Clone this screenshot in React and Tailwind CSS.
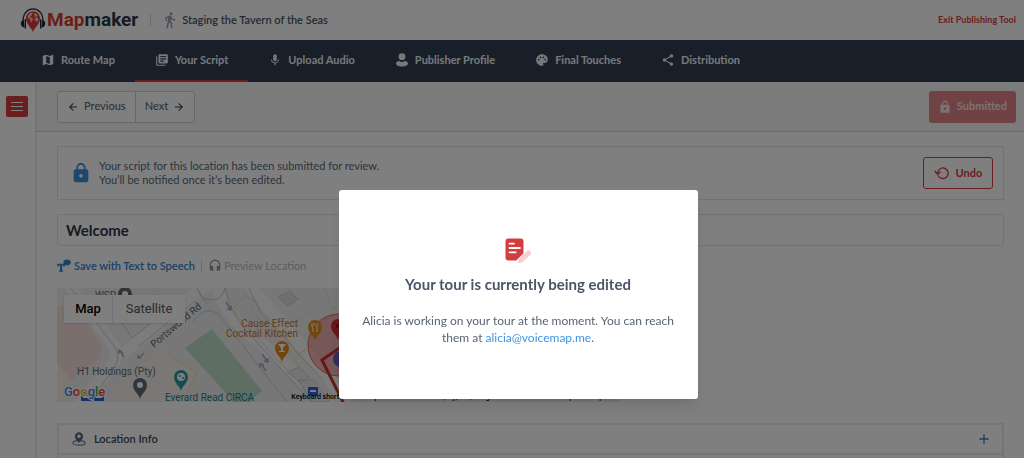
import React from "react";
import {
  MdMap,
  MdLibraryBooks,
  MdMic,
  MdPalette,
  MdShare,
  MdLock,
  MdArrowBack,
  MdArrowForward,
  MdDirectionsWalk,
  MdHeadset,
  MdAdd,
} from "react-icons/md";

function ProfileIcon({ className }) {
  return (
    <svg viewBox="0 0 14 14" className={className} fill="currentColor">
      <circle cx="7" cy="3.7" r="3.4" />
      <path d="M1 10.6C1 8.900 2.600 8 4 8c1 .6 2 .9 3 .9s2-.3 3-.9c1.400 0 3 .9 3 2.600 0 1.700-2.700 3-6 3s-6-1.300-6-3z" />
    </svg>
  );
}

function LogoMark() {
  return (
    <svg viewBox="0 0 26 26" className="h-[26px] w-[26px]">
      <path
        d="M3.400 16C2 7 7 2 13 2s11 5 9.600 14"
        fill="none"
        stroke="#2d3748"
        strokeWidth="1.400"
      />
      <path d="M3.800 13.200C1.800 13 .7 14.500.8 16.700c.1 2.200 1.700 3.800 3.700 3.800z" fill="#1f2937" />
      <path d="M22.200 13.200c2-.2 3.100 1.300 3 3.500-.1 2.200-1.700 3.800-3.700 3.800z" fill="#1f2937" />
      <path d="M5.300 12.800v8.200M20.700 12.800v8.200" stroke="#1f2937" strokeWidth="1.400" strokeLinecap="round" />
      <path
        d="M13 25.200c-.8-3.700-7-8-7-13.600C6 7.300 9 4.300 13 4.300s7 3 7 7.300c0 5.600-6.200 9.900-7 13.600z"
        fill="#d83a34"
      />
      <path
        d="M8.100 8.200c1.200-1.800 2.700-2.500 4.100-2.600l.8.900-1.200.8.300 1.100-1.600.6-.4 1.400 1.700.4 1.300 1.300-.9 1.500-.4 2-1.200-1.200-.3-1.900-1.700-1.300c-.9-.7-.9-1.900-.5-3z"
        fill="#f3c9c4"
      />
      <path
        d="M14.400 6.100c1.600.3 3 1.400 3.600 3l-.8.500-.9-.4-1.200.7-1.100-.8.900-.9-.7-1zM15.300 10.700l2.200.1.900 1.300c-.2 1.500-.9 2.500-1.900 3.300l-.5-1.700-1.400-.8z"
        fill="#f3c9c4"
      />
    </svg>
  );
}

function UndoIcon() {
  return (
    <svg viewBox="0 0 16 14" className="h-[14px] w-4" fill="none" stroke="currentColor">
      <path d="M4.200 9.700A5.300 5.300 0 1 0 3.700 6.300" strokeWidth="1.300" strokeLinecap="round" />
      <path d="M1.200 5.400l2.400 2.700 2.700-2.100" strokeWidth="1.500" strokeLinecap="round" strokeLinejoin="round" />
    </svg>
  );
}

function TextToSpeechIcon() {
  return (
    <svg viewBox="0 0 14 14" className="h-[14px] w-[14px]" fill="currentColor">
      <path d="M.3 4.800h7.400v2.600H6.400l-.4-1.200H5.100v5.100l1.100.5v1H1.900v-1l1.100-.5V6.200H2l-.4 1.200H.3z" />
      <path d="M9.900.4c2.200 0 3.900 1.300 3.900 3S12.100 6.300 9.900 6.300c-.5 0-.9 0-1.300-.2l-1.800.9.600-1.600c-.7-.5-1.100-1.200-1.100-2C6.300 1.700 7.800.4 9.900.4z" />
    </svg>
  );
}

function LocationIcon() {
  return (
    <svg viewBox="0 0 14 14" className="h-[14px] w-[14px]">
      <ellipse cx="7" cy="10.900" rx="6" ry="2.200" fill="none" stroke="#718096" strokeWidth="1.300" />
      <path
        d="M7 11.200C6.300 9.200 2.900 7.400 2.900 4.400A4.100 4.100 0 0 1 7 .2a4.100 4.100 0 0 1 4.100 4.200C11.100 7.400 7.700 9.200 7 11.200z"
        fill="#5a6b80"
      />
      <circle cx="7" cy="4.300" r="1.700" fill="#fff" />
    </svg>
  );
}

function EditingIcon() {
  return (
    <svg viewBox="0 0 26 26" className="h-[26px] w-[26px]">
      <path
        d="M3.500.5h12a3 3 0 0 1 3 3v11.800L11.200 22.500H3.500a3 3 0 0 1-3-3v-16a3 3 0 0 1 3-3z"
        fill="#d43d40"
      />
      <path d="M4.500 5.700h4.400M4.500 10h10.400M4.500 14.300h6.200" stroke="#fff" strokeWidth="1.800" strokeLinecap="round" />
      <path d="M13.200 25.200l.5-3.900 8.100-8.100a2.500 2.500 0 0 1 3.600 3.600l-8.200 7.800z" fill="#f5d0d2" />
    </svg>
  );
}

const tabs = [
  { label: "Route Map", icon: MdMap },
  { label: "Your Script", icon: MdLibraryBooks, active: true },
  { label: "Upload Audio", icon: MdMic },
  { label: "Publisher Profile", icon: ProfileIcon },
  { label: "Final Touches", icon: MdPalette },
  { label: "Distribution", icon: MdShare },
];

function Header() {
  return (
    <header className="flex h-10 shrink-0 items-center bg-white pr-2 pl-5">
      <a href="#home" className="flex items-center gap-px">
        <LogoMark />
        <span className="font-[Roboto] text-[19px] leading-5 font-bold text-[#2d3748]">
          <span className="text-[#d83a34]">Map</span>maker
        </span>
      </a>
      <span className="ml-3 h-3 w-px bg-gray-300" />
      <MdDirectionsWalk className="ml-[10px] h-[18px] w-[18px] text-gray-400" />
      <span className="ml-[3px] text-[11px] font-semibold text-[#4a5568]">Staging the Tavern of the Seas</span>
      <a href="#exit" className="ml-auto text-[9px] font-bold text-[#d43d40]">
        Exit Publishing Tool
      </a>
    </header>
  );
}

function TabBar() {
  return (
    <nav className="flex h-[42px] shrink-0 bg-[#303e52] pl-[21px]">
      {tabs.map(({ label, icon: Icon, active }) => (
        <a
          key={label}
          href="#tab"
          className={`flex items-center gap-[6px] border-b-2 px-5 text-[11px] font-bold text-[#edf2f7] ${
            active ? "border-[#d43d40]" : "border-transparent"
          }`}
        >
          <Icon className="h-[14px] w-[14px]" />
          {label}
        </a>
      ))}
    </nav>
  );
}

function Pin({ x, y, color, children }) {
  return (
    <g transform={`translate(${x} ${y})`}>
      <path d="M0 14C-1 9-7 6-7 0a7 7 0 0 1 14 0C7 6 1 9 0 14z" fill={color} />
      {children}
    </g>
  );
}

function TourMap() {
  return (
    <div className="relative mt-[14px] h-[114px] max-w-[563px] overflow-hidden bg-[#ededed]">
      <svg
        viewBox="0 0 563 114"
        preserveAspectRatio="xMinYMin slice"
        className="h-full w-full font-[Roboto]"
      >
        <rect width="563" height="114" fill="#efefee" />
        <path d="M0 18h20l25 40-2 12L14 92 0 104z" fill="#f6dfdd" />
        <path d="M0 76l14 16-10 8 6 14H0z" fill="#f9efe3" />
        <path d="M55 104l52-44 36 26-18 28H62z" fill="#f5efe8" />
        <path d="M128 60l27-19 50 62-12 11h-16z" fill="#bfdcc6" />
        <g fill="none" stroke="#f8f8f8" strokeWidth="12">
          <path d="M10-6l46 62q8 12-4 26L22 118" />
          <path d="M66 66l90-74" />
          <path d="M160 0q4 16 22 36l92 82" />
          <path d="M192-4l84 100 14 22" />
        </g>
        <g fill="none" stroke="#c9cdd3">
          <path d="M14 0l43 58q6 9 2 18-4 8-26 38" />
          <path d="M55 20l20 30 18-14M82 58l57-46M140 0q4 8 10 16" />
          <path d="M136 34q12-18 25-8l69 88" />
          <path d="M140-1q2 13 14 13t14-13" />
          <path d="M168 0q5 26 27 49l59 65M192 0l12 25 63 68" />
          <path d="M230 84l12-5 10 10-8 6zM241 92l16 0 16 22h-18z" fill="#e8e9ea" />
          <path d="M221 9l12-6 8 8-10 8z" fill="#dcdee0" />
        </g>
        <g fill="none" stroke="#f2dcb4">
          <path d="M0 88l22-24 4 6M97 0l14 9-12 8" />
          <path d="M176 21l12-14 10 7-5 6 50 58-9 8-52-56z" />
          <path d="M225 43l28-18 20 20-32 22z" />
          <path d="M267 0l8 21 19-9M110 65l30 20-10 20" />
        </g>
        <g stroke="#a8a9c9" strokeWidth="1.500" fill="none">
          <path d="M67 69l-4-6M66 65l-4-3v4M82 70l5-5M84 70h-3v-3" />
          <path d="M169 14l5 8M170 21l4 1v-4M205 66l6 8M207 73l4 1v-4M209 83l-5-7M203 80v-4l4 1" />
        </g>

        <circle cx="282" cy="57" r="31" fill="#e8736f" fillOpacity=".5" stroke="#d66" />
        <path d="M297 50l-32 22 22 44" fill="none" stroke="#cf2f2f" strokeWidth="3" />
        <Pin x={68} y={6} color="#5c6c7a">
          <circle r="3" fill="#fff" />
        </Pin>
        <Pin x={83} y={97} color="#5c6c7a">
          <circle r="3" fill="#fff" />
        </Pin>
        <Pin x={124} y={89} color="#2699a6">
          <circle r="4" fill="#fff" />
          <circle cx="-1" cy="-1" r="1" fill="#2699a6" />
          <circle cx="2" cy="1" r="1" fill="#2699a6" />
        </Pin>
        <Pin x={225} y={60} color="#e38f1e">
          <path d="M-4-4h8L1 0v3h2v1h-6V3h2V0z" fill="#fff" />
        </Pin>
        <Pin x={258} y={39} color="#e38f1e">
          <path d="M-3-4v3q0 2 1 2v4M-1-4v3M3-4q-2 1-1 5v4" stroke="#fff" fill="none" />
        </Pin>
        <Pin x={281} y={38} color="#cf2f2f">
          <circle r="2" fill="#8b1a1a" />
        </Pin>
        <circle cx="284" cy="71" r="8" fill="#5b5fc0" />
        <rect x="24" y="104" width="10" height="9" rx="1" fill="#2f63d0" />
        <rect x="37" y="104" width="10" height="9" rx="1" fill="#2f63d0" />
        <rect x="251" y="99" width="10" height="9" rx="1" fill="#2f63d0" />
        <path d="M26 109h6M39 109h6M253 103h6" stroke="#fff" strokeWidth="2" />

        <g fontSize="10" fill="#5c6c7a">
          <text x="38" y="11">WSP</text>
          <text x="20" y="87">H1 Holdings (Pty)</text>
          <text x="97" y="60" transform="rotate(-40 97 60)">Portswood Rd</text>
        </g>
        <g fontSize="10" fill="#c9772f" textAnchor="end">
          <text x="241" y="39">Cause Effect</text>
          <text x="241" y="49">Cocktail Kitchen</text>
        </g>
        <text x="108" y="113" fontSize="10" fill="#20808c">Everard Read CIRCA</text>
        <text x="7" y="108" fontSize="13" fontWeight="500" stroke="#fff" strokeWidth="2" paintOrder="stroke">
          <tspan fill="#4285f4">G</tspan>
          <tspan fill="#ea4335">o</tspan>
          <tspan fill="#fbbc04">o</tspan>
          <tspan fill="#4285f4">g</tspan>
          <tspan fill="#34a853">l</tspan>
          <tspan fill="#ea4335">e</tspan>
        </text>
      </svg>
      <div className="absolute top-[7px] left-[7px] flex h-7 bg-white font-[Roboto] text-[13px] shadow-sm">
        <button type="button" className="w-[49px] border-r border-gray-200 font-medium text-black">
          Map
        </button>
        <button type="button" className="w-[72px] text-[#565656]">
          Satellite
        </button>
      </div>
      <div className="absolute right-0 bottom-0 flex gap-3 font-[Roboto] text-[7px] leading-[10px] font-medium whitespace-nowrap text-black">
        <button type="button">Keyboard shortcuts</button>
        <span>Map data ©2023 AfriGIS (Pty) Ltd, Google</span>
        <a href="#terms">Terms of Use</a>
        <a href="#report">Report a map error</a>
      </div>
    </div>
  );
}

function Toolbar() {
  return (
    <div className="flex h-[50px] items-center justify-between border-b border-gray-300 bg-[#f7f7f7] pr-2 pl-[21px]">
      <div className="flex h-8 rounded-[3px] border border-[#cbd0d6] bg-white text-[11px] font-medium text-[#5a6778]">
        <button type="button" className="flex items-center gap-[5px] border-r border-[#cbd0d6] px-[9px]">
          <MdArrowBack className="h-3 w-3 text-[#2d3748]" />
          Previous
        </button>
        <button type="button" className="flex items-center gap-[5px] px-[9px]">
          Next
          <MdArrowForward className="h-3 w-3 text-[#2d3748]" />
        </button>
      </div>
      <button
        type="button"
        className="flex h-8 items-center gap-[5px] rounded-[3px] bg-[#e28488] px-[9px] text-[11px] font-bold text-[#f5e3e4]"
      >
        <MdLock className="h-[14px] w-[14px]" />
        Submitted
      </button>
    </div>
  );
}

function Section({ title }) {
  return (
    <section className="border-2 border-[#e9ebee]">
      <button type="button" className="flex h-7 w-full items-center pr-[10px] pl-[13px]">
        <LocationIcon />
        <span className="ml-2 text-[11px] font-semibold text-[#3a4657]">{title}</span>
        <MdAdd className="ml-auto h-4 w-4 text-[#3182ce]" />
      </button>
    </section>
  );
}

function ScriptPage() {
  return (
    <div className="pt-[14px] pr-5 pl-[21px]">
      <div className="flex h-[54px] items-center border border-[#e2e5e9] pr-[10px] pl-3">
        <MdLock className="h-[22px] w-[22px] text-[#3d8fdc]" />
        <p className="ml-[7px] text-[11px] leading-[14px] text-[#5a6778]">
          Your script for this location has been submitted for review.
          <br />
          You’ll be notified once it’s been edited.
        </p>
        <button
          type="button"
          className="ml-auto flex h-8 w-[70px] items-center justify-center gap-[6px] rounded-[3px] border border-[#d43d40] text-[11px] font-bold text-[#d43d40]"
        >
          <UndoIcon />
          Undo
        </button>
      </div>
      <input
        type="text"
        aria-label="Location title"
        defaultValue="Welcome"
        className="mt-[14px] block h-8 w-full rounded-[3px] border border-[#e2e5e9] px-2 text-[15px] font-bold text-[#2d3748]"
      />
      <div className="mt-3 flex h-4 items-center text-[11px]">
        <button type="button" className="flex items-center gap-[3px] font-semibold text-[#3182ce]">
          <TextToSpeechIcon />
          Save with Text to Speech
        </button>
        <span className="mx-[6px] h-3 w-px bg-gray-300" />
        <button type="button" disabled className="flex items-center gap-[2px] text-[#b5bac1]">
          <MdHeadset className="h-[14px] w-[14px] text-[#8a919b]" />
          Preview Location
        </button>
      </div>
      <TourMap />
      <div className="mt-[21px]">
        <Section title="Location Info" />
        <div className="h-8 border-x-2 border-[#e9ebee]" />
      </div>
    </div>
  );
}

function EditingModal() {
  return (
    <div className="fixed inset-0 z-20 flex items-start justify-center bg-black/50 pt-[190px] pl-3">
      <div
        role="dialog"
        aria-modal="true"
        aria-labelledby="editing-title"
        className="flex w-[359px] flex-col items-center rounded-[3px] bg-white px-5 pt-12 pb-[53px] text-center shadow-lg"
      >
        <EditingIcon />
        <h2 id="editing-title" className="mt-[10px] text-[15px] leading-5 font-bold text-[#4a5568]">
          Your tour is currently being edited
        </h2>
        <p className="mt-[18px] text-xs leading-[17px] text-[#5a6472]">
          Alicia is working on your tour at the moment. You can reach them at{" "}
          <a href="mailto:alicia@voicemap.me" className="text-[#3f96e4]">
            alicia@voicemap.me
          </a>
          .
        </p>
      </div>
    </div>
  );
}

function App() {
  return (
    <div className="flex h-screen flex-col overflow-hidden bg-white font-[Lato,sans-serif]">
      <Header />
      <TabBar />
      <div className="flex min-h-0 flex-1">
        <aside className="z-10 w-9 shrink-0 border-r border-gray-200 pt-[14px] pl-[6px] shadow">
          <button
            type="button"
            aria-label="Open menu"
            className="flex h-[21px] w-[22px] flex-col items-center justify-center gap-[3px] rounded-[2px] bg-[#d43d40]"
          >
            <span className="h-px w-3 bg-white" />
            <span className="h-px w-3 bg-white" />
            <span className="h-px w-3 bg-white" />
          </button>
        </aside>
        <main className="min-w-0 flex-1 overflow-hidden">
          <Toolbar />
          <ScriptPage />
        </main>
      </div>
      <EditingModal />
    </div>
  );
}

export default App;
